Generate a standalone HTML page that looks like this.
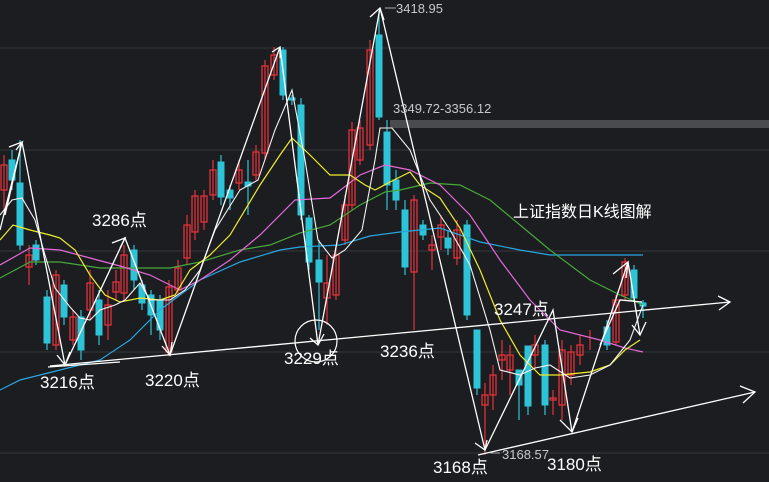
<!DOCTYPE html><html><head><meta charset="utf-8"><style>
html,body{margin:0;padding:0;background:#1c1d21;width:769px;height:482px;overflow:hidden}
svg{display:block}
.r{fill:none;stroke:#e2323a;stroke-width:1.3}
.c{fill:#2ec4d8;stroke:#2ec4d8}
.w{stroke:#fff;stroke-width:1.3;fill:none}
text{font-family:"Liberation Sans","Noto Sans CJK SC",sans-serif;fill:#fff}
</style></head><body>
<svg width="769" height="482" viewBox="0 0 769 482">
<g stroke="#34363b" stroke-width="1">
<line x1="0" y1="48" x2="769" y2="48"/><line x1="0" y1="150" x2="769" y2="150"/>
<line x1="0" y1="251" x2="769" y2="251"/><line x1="0" y1="352" x2="769" y2="352"/><line x1="0" y1="453" x2="769" y2="453"/>
</g>
<rect x="390" y="120" width="379" height="8" fill="#4a4b4e"/>
<g stroke-width="1.2">
<g stroke="#e2323a">
<path d="M4 155V215M29 245V285M56 270V350M73 310V345M90 270V320M108 290V340M116 270V300M124 245V300M169 280V356M178 260V295M187 215V265M195 190V240M204 190V230M213 160V200M239 160V190M256 145V180M265 60V160M274 47V80M327 255V325M336 245V300M345 195V245M352 122V210M360 120V165M370 40V150M414 195V330M432 235V270M441 215V250M457 220V265M485 383V455M493 365V410M502 340V380M510 345V395M535 335V370M553 390V415M562 340V420M571 345V385M580 335V365M590 330V350M616 295V345M625 258V300"/>
</g>
<g stroke="#2ec4d8">
<path d="M12 150V190M20 140V250M36 240V265M47 290V350M64 280V325M81 310V360M99 290V345M134 245V290M142 280V310M151 290V335M160 295V340M221 155V205M230 185V210M248 160V215M283 47V100M292 95V105M301 98V220M309 215V270M319 240V330M379 10V120M387 120V210M396 170V210M405 200V275M423 220V240M448 230V255M467 220V320M477 330V395M519 370V420M528 355V415M545 340V415M607 320V350M634 265V302M643 300V318"/>
</g></g>
<g class="r">
<rect x="1" y="165" width="6" height="25"/><rect x="26" y="255" width="6" height="12"/><rect x="53" y="275" width="6" height="70"/><rect x="70" y="317" width="6" height="23"/><rect x="87" y="283" width="6" height="27"/><rect x="105" y="305" width="6" height="20"/><rect x="113" y="282" width="6" height="10"/><rect x="121" y="255" width="6" height="38"/><rect x="166" y="287" width="6" height="65"/><rect x="175" y="268" width="6" height="22"/><rect x="184" y="225" width="6" height="33"/><rect x="192" y="196" width="6" height="36"/><rect x="201" y="196" width="6" height="26"/><rect x="210" y="170" width="6" height="25"/><rect x="236" y="170" width="6" height="13"/><rect x="253" y="152" width="6" height="23"/><rect x="262" y="66" width="6" height="87"/><rect x="271" y="55" width="6" height="20"/><rect x="324" y="283" width="6" height="15"/><rect x="333" y="255" width="6" height="40"/><rect x="342" y="205" width="6" height="35"/><rect x="349" y="130" width="6" height="75"/><rect x="357" y="128" width="6" height="32"/><rect x="367" y="50" width="6" height="95"/><rect x="411" y="200" width="6" height="72"/><rect x="429" y="245" width="6" height="5"/><rect x="438" y="225" width="6" height="12"/><rect x="454" y="230" width="6" height="28"/><rect x="482" y="395" width="6" height="10"/><rect x="490" y="375" width="6" height="20"/><rect x="499" y="355" width="6" height="5"/><rect x="507" y="355" width="6" height="15"/><rect x="532" y="345" width="6" height="10"/><rect x="550" y="398" width="6" height="2"/><rect x="559" y="350" width="6" height="55"/><rect x="568" y="352" width="6" height="23"/><rect x="577" y="345" width="6" height="10"/><rect x="613" y="300" width="6" height="42"/><rect x="622" y="262" width="6" height="33"/>
</g>
<g class="c">
<rect x="9" y="160" width="6" height="20"/><rect x="17" y="183" width="6" height="62"/><rect x="33" y="245" width="6" height="15"/><rect x="44" y="297" width="6" height="46"/><rect x="61" y="285" width="6" height="32"/><rect x="78" y="317" width="6" height="33"/><rect x="96" y="300" width="6" height="35"/><rect x="131" y="250" width="6" height="30"/><rect x="139" y="285" width="6" height="18"/><rect x="148" y="295" width="6" height="20"/><rect x="157" y="300" width="6" height="30"/><rect x="218" y="162" width="6" height="35"/><rect x="227" y="190" width="6" height="8"/><rect x="245" y="182" width="6" height="4"/><rect x="280" y="50" width="6" height="45"/><rect x="289" y="98" width="6" height="2"/><rect x="298" y="105" width="6" height="110"/><rect x="306" y="218" width="6" height="44"/><rect x="316" y="260" width="6" height="22"/><rect x="376" y="35" width="6" height="82"/><rect x="384" y="132" width="6" height="53"/><rect x="393" y="180" width="6" height="20"/><rect x="402" y="210" width="6" height="57"/><rect x="420" y="225" width="6" height="10"/><rect x="445" y="238" width="6" height="10"/><rect x="464" y="225" width="6" height="90"/><rect x="474" y="330" width="6" height="58"/><rect x="516" y="370" width="6" height="15"/><rect x="525" y="346" width="6" height="60"/><rect x="542" y="345" width="6" height="60"/><rect x="604" y="327" width="6" height="18"/><rect x="631" y="270" width="6" height="28"/><rect x="640" y="303" width="6" height="3"/>
</g>
<g fill="none" stroke-width="1.2">
<polyline stroke="#29a6e0" points="0,390 20,380 60,370 100,360 130,340 160,310 200,280 240,262 280,250 300,247 340,245 370,236 400,232 440,228 480,242 520,250 550,255 600,255 643,255"/>
<polyline stroke="#48a83a" points="0,278 30,262 60,262 100,268 140,268 170,268 200,262 240,250 270,245 300,233 330,225 360,205 385,192 400,190 430,183 460,185 490,200 520,225 550,250 590,280 620,295 643,305"/>
<polyline stroke="#e46ad8" points="0,265 30,248 60,250 90,258 120,266 150,275 180,290 200,280 230,260 260,235 295,200 330,198 360,175 385,165 410,170 440,185 470,215 500,260 530,300 560,330 600,340 625,348 643,352"/>
<polyline stroke="#f0ee2a" points="0,240 13,225 30,230 50,235 60,238 75,250 90,275 105,295 120,302 140,298 160,300 175,295 190,270 210,255 230,235 260,185 280,155 292,138 310,155 330,175 350,175 365,185 375,190 390,182 410,172 420,185 440,198 460,228 480,270 500,320 520,355 540,375 560,375 590,372 610,365 625,350 640,340"/>
<polyline stroke="#f3f3f3" stroke-width="1.1" points="0,215 12,200 22,198 35,220 45,255 55,288 70,307 80,318 90,320 100,310 115,305 125,300 140,283 150,300 170,300 185,290 200,270 215,230 240,190 258,180 275,130 292,90 305,160 318,240 332,258 345,250 362,230 375,160 380,128 392,128 410,150 430,200 450,230 470,265 490,330 500,370 520,375 535,368 550,365 570,378 590,375 610,365 630,340 643,305"/>
</g>
<g class="w">
<polyline points="0,230 22,142 65,365 125,238 170,355 280,47 318,345 380,8 485,450 553,310 572,432 628,262 640,335"/>
<polyline points="5,215 22,142"/>
<path d="M50 366 L730 302"/><path d="M718 296 L730 302 L719 310"/>
<path d="M478 455 L755 392"/><path d="M740 386 L755 392 L743 403"/>
<path d="M48 367 L120 362"/>
<path d="M9 147 L22 142 L16 150"/>
<path d="M57 355 L65 365 L70 352"/><path d="M112 243 L125 238 L120 248"/><path d="M162 346 L170 355 L172 342"/><path d="M272 52 L280 47 L280 58"/><path d="M310 338 L318 345 L324 334"/><path d="M370 17 L380 8 L384 20"/><path d="M475 443 L485 450 L487 440"/><path d="M560 420 L572 432 L578 418"/><path d="M613 274 L628 262 L626 278"/><path d="M632 325 L640 335 L646 322"/>
<polyline points="600,345 620,300 642,302"/>
</g>
<circle cx="316" cy="341" r="21" fill="none" stroke="#fff" stroke-width="1.2"/>
<line x1="385" y1="8" x2="396" y2="8" stroke="#aaa"/>
<line x1="490" y1="453" x2="500" y2="453" stroke="#aaa"/>
<g font-size="17">
<text x="92" y="226">3286点</text>
<text x="40" y="388">3216点</text>
<text x="145" y="386">3220点</text>
<text x="284" y="364">3229点</text>
<text x="380" y="357">3236点</text>
<text x="494" y="315">3247点</text>
<text x="433" y="473">3168点</text>
<text x="547" y="470">3180点</text>
<text x="513" y="217" font-size="16">上证指数日K线图解</text>
</g>
<g font-size="13">
<text x="396" y="13" style="fill:#c8c8c8">3418.95</text>
<text x="393" y="113" style="fill:#c8c8c8">3349.72-3356.12</text>
<text x="502" y="459" style="fill:#c8c8c8">3168.57</text>
</g>
</svg>
</body></html>
